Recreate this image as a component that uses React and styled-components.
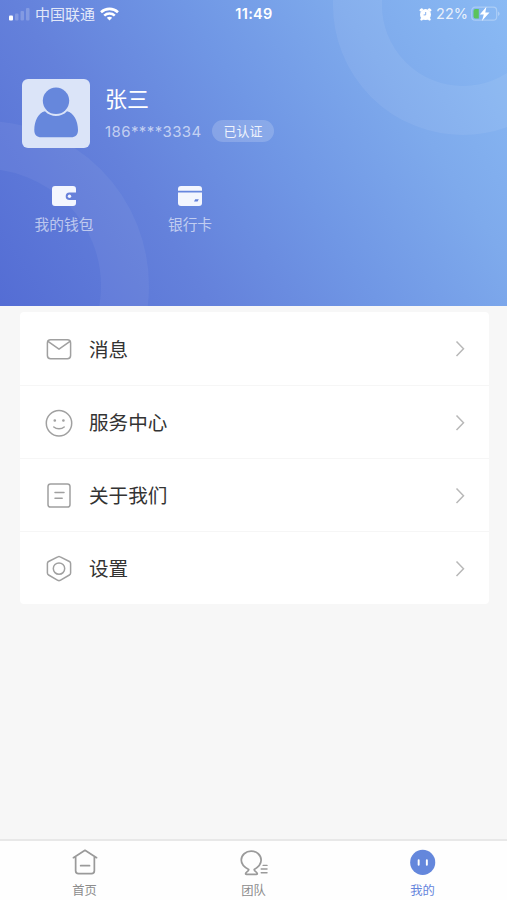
import React, { useState } from 'react';
import styled, { createGlobalStyle } from 'styled-components';

const GlobalStyle = createGlobalStyle`
  * {
    box-sizing: border-box;
  }

  body {
    margin: 0;
    background: #f7f7f7;
    font-family: Inter, "Noto Sans CJK SC", sans-serif;
  }
`;

const Page = styled.div`
  display: flex;
  flex-direction: column;
  height: 900px;
  overflow: hidden;
  background: #f7f7f7;
`;

const Header = styled.header`
  position: relative;
  height: 306px;
  flex-shrink: 0;
  overflow: hidden;
  color: #fff;
  background: linear-gradient(57deg, #546dd4 0%, #6481db 30%, #7097e5 54%, #7eaaec 76%, #8abaf4 100%);
`;

const HeaderRings = styled.svg`
  position: absolute;
  top: 0;
  left: 0;
`;

const HeaderContent = styled.div`
  position: relative;
`;

const StatusBar = styled.div`
  display: grid;
  grid-template-columns: 1fr auto 1fr;
  align-items: center;
  height: 28px;
  padding: 0 7px 0 8px;
`;

const StatusSide = styled.div`
  display: flex;
  align-items: center;
  justify-content: ${(props) => (props.$right ? 'flex-end' : 'flex-start')};
  gap: ${(props) => (props.$right ? '4px' : '5px')};
  white-space: nowrap;
  color: rgba(255, 255, 255, 0.84);
`;

const Carrier = styled.span`
  padding-top: 1px;
  font-size: 15px;
  line-height: 20px;
`;

const Battery = styled.span`
  margin-right: -1px;
  font-size: 14.5px;
  line-height: 18px;
`;

const Clock = styled.span`
  font-size: 14.5px;
  font-weight: 600;
  line-height: 18px;
  letter-spacing: 0.3px;
  margin-top: -1px;
`;

const Profile = styled.div`
  display: flex;
  gap: 15px;
  padding: 51px 22px 0;
`;

const Avatar = styled.div`
  width: 68px;
  height: 69px;
  border-radius: 6px;
  background: #dbe4f8;
`;

const ProfileInfo = styled.div`
  padding-top: 5px;
`;

const Name = styled.div`
  font-size: 22px;
  line-height: 30px;
`;

const PhoneRow = styled.div`
  display: flex;
  align-items: center;
  gap: 11px;
  margin-top: 6px;
  height: 22px;
`;

const Phone = styled.span`
  width: 96px;
  font-size: 15px;
  letter-spacing: 0.4px;
  white-space: nowrap;
  color: rgba(255, 255, 255, 0.62);
`;

const Badge = styled.span`
  width: 62px;
  height: 22px;
  border-radius: 11px;
  background: rgba(255, 255, 255, 0.18);
  color: rgba(255, 255, 255, 0.88);
  font-size: 13px;
  line-height: 23px;
  text-align: center;
`;

const Shortcuts = styled.div`
  display: flex;
  padding: 38px 0 0 1px;
`;

const Shortcut = styled.div`
  display: flex;
  flex-direction: column;
  align-items: center;
  width: 126px;
  gap: 8px;
  font-size: 14.7px;
  line-height: 22px;
  color: rgba(255, 255, 255, 0.6);

  svg {
    display: block;
  }
`;

const Menu = styled.div`
  flex-shrink: 0;
  margin: 6px 18px 0 20px;
  border-radius: 4px;
  background: #fff;
`;

const MenuItem = styled.div`
  display: flex;
  align-items: center;
  height: 73.1px;
  padding: 1px 24px 0 25px;
  cursor: pointer;

  & + & {
    border-top: 1px solid #f6f6f6;
  }
`;

const MenuLabel = styled.span`
  flex: 1;
  margin-left: 16px;
  padding-top: 1px;
  font-size: 19.6px;
  line-height: 28px;
  color: #333;
`;

const TabBar = styled.nav`
  display: flex;
  height: 61px;
  flex-shrink: 0;
  margin-top: auto;
  border-top: 2px solid #e8e8e8;
  background: #fefefe;
`;

const Tab = styled.div`
  display: flex;
  flex: 1;
  flex-direction: column;
  align-items: center;
  padding-top: 8px;
  font-size: 12.3px;
  line-height: 18px;
  gap: 6px;
  color: ${(props) => (props.$active ? '#6484dc' : '#8c8c8c')};
  cursor: pointer;

  svg {
    display: block;
  }
`;

const SignalIcon = () => (
  <svg width="22" height="14" viewBox="0 0 22 14" fill="#fff">
    <rect x="1" y="8.5" width="4" height="5" rx="1" />
    <rect x="7" y="6.5" width="3.5" height="7" rx="1" opacity="0.2" />
    <rect x="12.5" y="4" width="3.5" height="9.5" rx="1" opacity="0.2" />
    <rect x="18" y="1" width="3.5" height="12.5" rx="1" opacity="0.2" />
  </svg>
);

const WifiIcon = () => (
  <svg width="19" height="14" viewBox="0 0 19 14" fill="none" stroke="#fff" strokeWidth="2.6">
    <path d="M1 5.2C5.8.7 13.2.7 18 5.2" />
    <path d="M4.2 8.6c3-2.8 7.6-2.8 10.6 0" />
    <path d="M9.5 13.5 6.8 10.8c1.5-1.4 3.9-1.4 5.4 0z" fill="#fff" stroke="none" />
  </svg>
);

const AlarmIcon = () => (
  <svg width="13" height="13" viewBox="0 0 13 13">
    <g stroke="#fff" strokeWidth="2.4" strokeLinecap="round">
      <path d="M1.8 2.2l1-.8M11.2 2.2l-1-.8M2.5 11.3l1-1M10.5 11.3l-1-1" />
    </g>
    <circle cx="6.5" cy="6.6" r="5.5" fill="#fff" />
    <path d="M6.7 4v2.900H4.600" fill="none" stroke="#7ca9ee" strokeWidth="0.900" />
  </svg>
);

const BatteryIcon = () => (
  <svg width="29" height="16" viewBox="0 0 29 16">
    <rect x="0.7" y="1.2" width="25" height="13" rx="3.5" fill="none" stroke="#fff" strokeOpacity="0.3" strokeWidth="1.2" />
    <path d="M27.2 5.6V10c1.8-.8 1.8-3.6 0-4.4z" fill="#fff" opacity="0.4" />
    <path d="M4.5 3H7.800v9.600H4.500a2 2 0 0 1-2-2V5a2 2 0 0 1 2-2z" fill="#5bc35c" />
    <path d="M15.400.7 8.800 8.400h4L10.900 15l7.600-8.500h-4.200z" fill="#fff" />
  </svg>
);

const UserIcon = () => (
  <svg width="68" height="69" viewBox="0 0 68 69" fill="#6687dc">
    <circle cx="34" cy="21.8" r="13.2" />
    <path d="M23 32.3C26 35.6 30 37 34 37s8-1.4 11-4.7c6.6 1.3 11 10 11 18.7 0 4.8-2.5 7.3-7 7.3H19.3c-4.5 0-7-2.5-7-7.3 0-8.7 4.1-17.4 10.7-18.7z" />
  </svg>
);

const WalletIcon = () => (
  <svg width="24" height="20" viewBox="0 0 24 20" fill="#f3f6fe">
    <path d="M3 0h18a3 3 0 0 1 3 3v3.4h-6.500a3.800 3.800 0 0 0 0 7.600H24v3a3 3 0 0 1-3 3H3a3 3 0 0 1-3-3V3a3 3 0 0 1 3-3z" />
    <circle cx="17.500" cy="10.200" r="1.700" />
  </svg>
);

const CardIcon = () => (
  <svg width="24" height="20" viewBox="0 0 24 20" fill="#f3f6fe">
    <path d="M3 0h18a3 3 0 0 1 3 3v1.700H0V3a3 3 0 0 1 3-3z" />
    <path d="M0 6.500h24V17a3 3 0 0 1-3 3H3a3 3 0 0 1-3-3z" />
    <path d="M17.200 13.200h3.600l-1.200 2.400H16z" fill="#6482da" />
  </svg>
);

const lineIcon = {
  width: 28,
  height: 28,
  viewBox: '0 0 28 28',
  fill: 'none',
  stroke: '#a0a0a0',
  strokeWidth: 1.5,
  strokeLinecap: 'round',
  strokeLinejoin: 'round',
};

const MailIcon = () => (
  <svg {...lineIcon}>
    <rect x="2.4" y="4.7" width="23.2" height="19" rx="3.2" />
    <path d="M3 6.3l11 7.900 11-7.900" />
  </svg>
);

const SmileIcon = () => (
  <svg {...lineIcon}>
    <circle cx="14" cy="14.300" r="12.700" />
    <path d="M8.800 18c2.800 2.400 7.600 2.400 10.400 0" />
    <circle cx="9.800" cy="11.500" r="0.600" fill="#a0a0a0" />
    <circle cx="18.400" cy="11.500" r="0.600" fill="#a0a0a0" />
  </svg>
);

const AboutIcon = () => (
  <svg {...lineIcon}>
    <rect x="3" y="2" width="22" height="23" rx="2.600" />
    <path d="M10 10.500h9M10 16.200h7.200" />
  </svg>
);

const SettingsIcon = () => (
  <svg {...lineIcon}>
    <path d="M12.800 1.800a2.500 2.500 0 0 1 2.400 0l9.200 4.700a2.300 2.300 0 0 1 1.200 2V18a2.300 2.300 0 0 1-1.200 2l-9.200 5.300a2.500 2.500 0 0 1-2.400 0L3.600 20a2.300 2.300 0 0 1-1.200-2V8.500a2.300 2.300 0 0 1 1.200-2z" />
    <circle cx="14" cy="13.600" r="5.700" />
  </svg>
);

const ArrowIcon = () => (
  <svg width="10" height="18" viewBox="0 0 10 18" fill="none" stroke="#b8b8b8" strokeWidth="1.500">
    <path d="M1.500 1.500l7 7.200-7 7.200" />
  </svg>
);

const HomeIcon = () => (
  <svg width="28" height="28" viewBox="0 0 28 28" fill="none" stroke="#9a9a9a" strokeWidth="1.800" strokeLinecap="round" strokeLinejoin="round">
    <path d="M2 9 14 1.400l12 7.600M4.300 8v14.500a3 3 0 0 0 3 3h13.400a3 3 0 0 0 3-3V8M9.500 17.300h9.200" />
  </svg>
);

const TeamIcon = () => (
  <svg width="28" height="28" viewBox="0 0 28 28" fill="none" stroke="#9a9a9a" strokeWidth="1.800" strokeLinecap="round" strokeLinejoin="round">
    <path d="M8.500 21.300C3.600 18.800.8 15.500.8 11.500a10.300 9.300 0 0 1 20.600 0c0 4-2.800 7.300-7.200 9.800 0 2 2.800 2.200 3.200 4.200.1.600-.2.900-.9.900H6.200c-.7 0-1-.3-.9-.9.400-2 3.200-2.200 3.200-4.200" />
    <path d="M23.500 17h4M21.500 20.800h6M21.500 24.600h6" strokeWidth="1.500" />
  </svg>
);

const MineIcon = () => (
  <svg width="28" height="28" viewBox="0 0 28 28">
    <circle cx="13.700" cy="13.900" r="13" fill="#6487dc" />
    <path d="M9.500 11.700v4.700M18 11.700v4.700" stroke="#fff" strokeWidth="2" strokeLinecap="round" />
  </svg>
);

const menuItems = [
  { label: '消息', icon: MailIcon },
  { label: '服务中心', icon: SmileIcon },
  { label: '关于我们', icon: AboutIcon },
  { label: '设置', icon: SettingsIcon },
];

const tabs = [
  { key: 'home', label: '首页', icon: HomeIcon },
  { key: 'team', label: '团队', icon: TeamIcon },
  { key: 'mine', label: '我的', icon: MineIcon },
];

const App = () => {
  const [activeTab, setActiveTab] = useState('mine');

  return (
    <Page>
      <GlobalStyle />
      <Header>
        <HeaderRings width="507" height="306" viewBox="0 0 507 306" fill="none" stroke="#fff">
          <circle cx="463" cy="5" r="105.500" strokeWidth="49" strokeOpacity="0.065" />
          <circle cx="-16" cy="286" r="141" strokeWidth="48" strokeOpacity="0.050" />
        </HeaderRings>
        <HeaderContent>
          <StatusBar>
            <StatusSide>
              <SignalIcon />
              <Carrier>中国联通</Carrier>
              <WifiIcon />
            </StatusSide>
            <Clock>11:49</Clock>
            <StatusSide $right>
              <AlarmIcon />
              <Battery>22%</Battery>
              <BatteryIcon />
            </StatusSide>
          </StatusBar>
          <Profile>
            <Avatar>
              <UserIcon />
            </Avatar>
            <ProfileInfo>
              <Name>张三</Name>
              <PhoneRow>
                <Phone>186****3334</Phone>
                <Badge>已认证</Badge>
              </PhoneRow>
            </ProfileInfo>
          </Profile>
          <Shortcuts>
            <Shortcut>
              <WalletIcon />
              我的钱包
            </Shortcut>
            <Shortcut>
              <CardIcon />
              银行卡
            </Shortcut>
          </Shortcuts>
        </HeaderContent>
      </Header>
      <Menu>
        {menuItems.map(({ label, icon: Icon }) => (
          <MenuItem key={label}>
            <Icon />
            <MenuLabel>{label}</MenuLabel>
            <ArrowIcon />
          </MenuItem>
        ))}
      </Menu>
      <TabBar>
        {tabs.map(({ key, label, icon: Icon }) => (
          <Tab key={key} $active={activeTab === key} onClick={() => setActiveTab(key)}>
            <Icon />
            {label}
          </Tab>
        ))}
      </TabBar>
    </Page>
  );
};

export default App;
